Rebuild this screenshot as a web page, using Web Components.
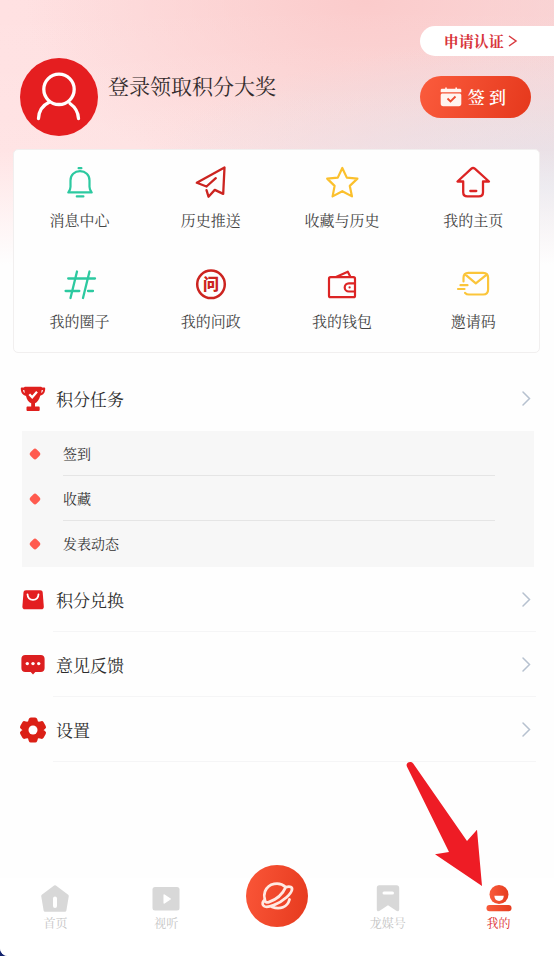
<!DOCTYPE html>
<html lang="zh-CN">
<head>
<meta charset="utf-8">
<meta name="viewport" content="width=device-width, initial-scale=1">
<title>我的</title>
<style>
  html { background: #14246e; }
  body {
    margin: 0;
    font-family: "Noto Serif CJK SC", "Noto Serif SC", "Liberation Serif", "Noto Sans CJK SC", serif;
    color: #333;
  }
</style>
</head>
<body>
<profile-page></profile-page>

<script>
const ICONS = {
  bell: `<svg viewBox="0 0 36 36" fill="none" stroke="#2cc9a0" stroke-width="2.2" stroke-linecap="round" stroke-linejoin="round"><path d="M16.6 3.2h2.8M6.3 27.4h23.4c-1.700-1.800-2.200-3.300-2.200-5.600v-6.300c0-5.500-4-9.300-9.500-9.300s-9.500 3.800-9.500 9.300v6.300c0 2.300-.5 3.800-2.200 5.600zM14.800 31.400h6.600"/></svg>`,
  plane: `<svg viewBox="0 0 36 36" fill="none" stroke="#cc2420" stroke-width="2.300" stroke-linecap="round" stroke-linejoin="round"><path d="M13.500 21.500 3.800 17.800 31.500 2.500l-1.300 26.400-8.400-4-6.300 6.800-2-6.600M13.500 21.500l9.300-8.300"/></svg>`,
  star: `<svg viewBox="0 0 36 36" fill="none" stroke="#fbc02d" stroke-width="2.200" stroke-linejoin="round"><path d="m18.300 3 4.500 9.600 10.600 1-7.600 7.300 2.200 10.500-9.700-5.200-9.700 5.200 2-10.500L3.200 13.600l10.600-1z"/></svg>`,
  home: `<svg viewBox="0 0 36 36" fill="none" stroke="#dc2424" stroke-width="2.300" stroke-linecap="round" stroke-linejoin="round"><path d="M16.400 3.700 2.500 16.500h5.700v10.700c0 2.600 1.600 4.200 4.200 4.200h11.400c2.600 0 4.200-1.600 4.200-4.200V16.500h6L19.800 3.700c-1.200-1-2.300-1-3.400 0zM15.300 26h6"/></svg>`,
  hash: `<svg viewBox="0 0 36 36" fill="none" stroke="#2cc9a0" stroke-width="2.300" stroke-linecap="round"><path d="M6.200 12.500H33M3.600 25h13.700M26 25h5M15 5.500 8.500 32M27.500 5.500 21 32"/></svg>`,
  ask: `<svg viewBox="0 0 36 36"><circle cx="18" cy="18.300" r="13.800" stroke-width="2.500" fill="none" stroke="#cc2420"/><text x="18" y="24" text-anchor="middle" font-family="Noto Sans CJK SC, sans-serif" font-size="16" font-weight="900" fill="#cc2420">问</text></svg>`,
  wallet: `<svg viewBox="0 0 36 36" fill="none" stroke="#dc2424" stroke-width="2.200" stroke-linejoin="round"><rect x="5" y="11.200" width="26" height="20" rx="1.500"/><path d="m12 11 11.800-5.300 2.700 5.300M31 17.300h-6.200a4.100 4.100 0 0 0 0 8.200H31"/><circle cx="25.600" cy="21.400" r="1.100" fill="#dc2424" stroke="none"/></svg>`,
  invite: `<svg viewBox="0 0 36 36" fill="none" stroke="#fbc53a" stroke-width="2.200" stroke-linecap="round" stroke-linejoin="round"><path d="M8.500 15.500v-3.700c0-3.200 1.700-5 5-5h14.600c3.200 0 5 1.800 5 5v11.700c0 3.200-1.800 5-5 5H14c-1.700 0-2.900-.5-3.900-1.600M10.700 8.800l10.100 8.500L32 8.300M5.500 19.200h7M3 23h6.500"/></svg>`,
  trophy: `<svg viewBox="0 0 26 26"><path fill="#df1f1d" d="M5 .8h16c.5 0 .9.300 1 .8h2.200c.6 0 1 .4 1 1 0 4.200-1.700 6.300-5 7.200-1 4-2.800 6.400-5.200 7.400v3.300h3.500c.8 0 1.200.4 1.200 1.200v2.100c0 .8-.4 1.200-1.200 1.200H7.700c-.8 0-1.200-.4-1.200-1.200v-2.100c0-.8.4-1.200 1.200-1.200h3.500v-3.300C8.600 16.200 7 13.800 6 9.900 2.600 9 .8 6.900.8 2.600c0-.6.4-1 1-1H4c.1-.5.500-.8 1-.8z"/><path fill="#fff" d="M3.100 3.900c.1 1.500.6 2.500 1.700 3L4.300 3.900zM22.900 3.900c-.1 1.500-.6 2.500-1.700 3l.5-3z"/><path fill="none" stroke="#fff" stroke-width="2.300" d="m9.300 8.300 2.900 3L17 5.800"/></svg>`,
  bag: `<svg viewBox="0 0 26 26"><path fill="#e31e20" d="M6 3.300h14.200c1.500 0 2.300.7 2.500 2.200l1.100 13.900c.1 1.700-.8 2.900-2.500 2.900H4.900c-1.700 0-2.600-1.200-2.500-2.900L3.500 5.500c.2-1.500 1-2.200 2.500-2.200z"/><path fill="none" stroke="#fff" stroke-width="1.800" stroke-linecap="round" d="M7.500 7.300c.2 3.500 2.300 5.600 5.500 5.600s5.300-2.100 5.500-5.600"/></svg>`,
  chat: `<svg viewBox="0 0 26 26"><path fill="#dc1f20" d="M5.200 3h15.600c2.300 0 3.800 1.500 3.800 3.800v9.400c0 2.300-1.500 3.800-3.800 3.800h-5.500L13 22.400 10.700 20H5.200c-2.300 0-3.800-1.500-3.800-3.800V6.800C1.400 4.500 2.900 3 5.200 3z"/><g fill="#fff"><circle cx="7.300" cy="11.600" r="1.700"/><circle cx="13" cy="11.600" r="1.700"/><circle cx="18.700" cy="11.600" r="1.700"/></g></svg>`,
  gear: `<svg viewBox="0 0 26 26"><path fill="#db2016" stroke="#db2016" stroke-width="4.400" stroke-linejoin="round" d="M10.900 2.600h4.200l1 3.300 2.200 1.300 3.400-.9 2.100 3.700-2.400 2v2l2.400 2-2.100 3.700-3.400-.9-2.200 1.300-1 3.300h-4.200l-1-3.300-2.200-1.300-3.400.9L2.200 16l2.400-2v-2l-2.400-2 2.100-3.700 3.400.9 2.200-1.300z"/><circle cx="13" cy="13" r="4.500" fill="#fff"/></svg>`,
  tabHome: `<svg viewBox="0 0 28 28"><path fill="#d8d8d8" stroke="#d8d8d8" stroke-width="3" stroke-linejoin="round" d="M14 1.800 26.300 11l-2.400 14.300H4.100L1.700 11z"/><path stroke="#fff" stroke-width="4" stroke-linecap="round" d="M14 13.500V21"/></svg>`,
  tabVideo: `<svg viewBox="0 0 28 28"><rect x=".5" y="2" width="27" height="23.500" rx="2.500" fill="#d8d8d8"/><path fill="#fff" stroke="#fff" stroke-width="1.500" stroke-linejoin="round" d="M12.200 10v8l6-4z"/></svg>`,
  tabBook: `<svg viewBox="0 0 28 28"><path fill="#d8d8d8" d="M5.200.2h17.500c1.500 0 2.500 1 2.500 2.500v21.500c0 2-1.400 2.600-2.900 1.600L14 20.300l-8.300 5.500c-1.500 1-2.900.4-2.900-1.600V2.700C2.800 1.200 3.700.2 5.200.2z"/><path stroke="#fff" stroke-width="3" stroke-linecap="round" d="M10 8h8.500"/></svg>`,
  tabMine: `<svg viewBox="0 0 28 28"><defs><linearGradient id="m"><stop stop-color="#f85b3b"/><stop offset="1" stop-color="#e63d20"/></linearGradient></defs><circle cx="14" cy="9.500" r="9.500" fill="url(#m)"/><rect x="1.500" y="20" width="25" height="6.300" rx="3" fill="url(#m)"/><path fill="#fff" d="M9.300 10.800h9.500c-.2 3.400-2 5.200-4.700 5.200s-4.600-1.800-4.800-5.200z"/></svg>`,
  planet: `<svg viewBox="0 0 36 32" fill="none" stroke="#ffe9e2" stroke-width="2.800" stroke-linecap="round" stroke-linejoin="round"><path d="M26.800 7.200C20.300 1 9.300 3 6 11.500c-1 2.700-1 5.400-.2 8M26.800 7.200c4.500-1.200 6.800 0 6.100 2.800-.5 2-2.300 4.500-5.300 7.300-7.200 6.600-19.300 11.300-22.800 8.700-2-1.500-1.300-4 1-6.500.2 2.500 1.700 3.500 4 2.600C16.500 20 23.500 14.500 26.800 7.200M13 27c8 2.700 15.500.3 17.500-7.500"/></svg>`,
  calendar: `<svg viewBox="0 0 22 20"><path fill="#fff4ef" d="M2.500 6.500h17c1 0 1.800.7 1.800 1.700v8.600c0 1.500-.9 2.400-2.400 2.400H3.100C1.600 19.200.7 18.300.7 16.800V8.200c0-1 .8-1.700 1.800-1.700zM2.200 1.800h3V.6h1.600v1.200h8.600V.6H17v1.200h2.800c1 0 1.500.6 1.500 1.400v2H.7v-2c0-.8.5-1.400 1.500-1.400z"/><path fill="none" stroke="#ee4b2e" stroke-width="1.800" d="m7.500 11.500 3 3 5-5"/></svg>`,
  user: `<svg viewBox="0 0 78 78" fill="none" stroke="#fff" stroke-width="3.300" stroke-linecap="round"><circle cx="39" cy="31.300" r="15.200"/><path d="M29.500 44C22.700 47.300 18.800 53.500 18.500 60.500M50 45.500c5.300 3.800 8.200 9 8.500 15"/></svg>`,
  chevron: `<svg viewBox="0 0 20 20" fill="none" stroke="#b6c1cf" stroke-width="1.500" stroke-linecap="round"><path d="m7 4 6.500 6.500L7 17"/></svg>`,
  more: `<svg viewBox="0 0 10 12" fill="none" stroke="#d83a3f" stroke-width="1.500"><path d="m1 1 7 5-7 5"/></svg>`,
  pointer: `<svg viewBox="0 0 90 130"><path fill="#ee1c25" d="M7 6.700C5 2.700 10.500.2 13.200 3.500L67 81l10-11.200 5 56.200L35 94.200l14-2.300z"/></svg>`
};

function define(name, css, html) {
  const template = document.createElement('template');
  customElements.define(name, class extends HTMLElement {
    connectedCallback() {
      if (this.shadowRoot) return;
      template.innerHTML = `<style>*{box-sizing:border-box}${css}</style>${typeof html === 'function' ? html(this) : html}`;
      this.attachShadow({ mode: 'open' }).append(template.content.cloneNode(true));
    }
  });
}

define('ui-icon', `:host{display:block;flex:none} svg{display:block;width:100%;height:100%;overflow:visible}`,
  el => ICONS[el.getAttribute('name')].replace('<svg', '<svg aria-hidden="true"'));

define('profile-header', `
  :host{display:grid;grid-template-columns:78px 1fr auto;grid-template-rows:110px;column-gap:10px;padding:26px 0 13px 20px}
  .avatar{align-self:end;width:78px;height:78px;padding:0;border:0;border-radius:50%;background:#e51e20}
  .avatar ui-icon{width:78px;height:78px}
  h1{margin:48px 0 0;font-size:21px;line-height:22px;font-weight:400;color:#332b2c}
  .actions{display:grid;gap:20px;justify-items:start;align-content:start}
  button{font-family:inherit;cursor:pointer}
  .verify{display:flex;align-items:center;gap:4px;width:100%;height:30px;padding:0 36px 0 24px;border:0;border-radius:15px 0 0 15px;background:#fff;color:#d8343b;font-size:15px;line-height:20px;font-weight:700}
  .verify ui-icon{width:10px;height:12px}
  .sign{display:flex;align-items:center;gap:6px;height:42px;margin-right:23px;padding:0 25px 0 20px;border:0;border-radius:21px;background:linear-gradient(110deg,#fb5c3d,#e5381c);color:#fff;font-size:17px;line-height:20px;font-weight:600}
  .sign ui-icon{width:22px;height:20px}`,
  `<button class="avatar" aria-label="头像"><ui-icon name="user"></ui-icon></button>
   <h1><slot></slot></h1>
   <div class="actions">
     <button class="verify">申请认证<ui-icon name="more"></ui-icon></button>
     <button class="sign"><ui-icon name="calendar"></ui-icon>签 到</button>
   </div>`);

define('shortcut-grid', `
  :host{display:grid;grid-template-columns:repeat(4,1fr);margin:0 14px 0 13px;border:1px solid #f1efef;border-radius:5px;background:#fefefe}`,
  `<slot></slot>`);

define('shortcut-item', `
  :host{display:block}
  a{display:grid;justify-items:center;gap:9px;padding:15px 0 21px;color:#444;text-decoration:none;font-size:15px;line-height:20px}
  ui-icon{width:36px;height:36px}`,
  el => `<a href="#"><ui-icon name="${el.getAttribute('icon')}"></ui-icon><span><slot></slot></span></a>`);

define('menu-row', `
  :host{display:block;margin:0 18px 0 20px}
  a{display:flex;align-items:center;gap:7px;color:#2c2c2c;text-decoration:none;font-size:17px}
  .mark{width:26px;height:26px}
  .body{flex:1;display:flex;align-items:center;justify-content:space-between;min-height:65px;padding-left:3px;border-bottom:1px solid #f5f5f6}
  :host([open]) .body{border-color:transparent}
  .go{width:20px;height:20px}`,
  el => `<a href="#"><ui-icon class="mark" name="${el.getAttribute('icon')}"></ui-icon><span class="body"><span><slot></slot></span><ui-icon class="go" name="chevron"></ui-icon></span></a>`);

define('task-panel', `:host{display:block;margin:0 20px 0 22px;padding:0 39px 1px 8px;background:#f7f7f7}`, `<slot></slot>`);

define('task-item', `
  :host{display:flex;align-items:center;gap:23px;font-size:14px}
  i{flex:none;width:10px;height:10px}
  svg{display:block;overflow:visible}
  span{flex:1;display:flex;align-items:center;min-height:45px;border-bottom:1px solid #e5e5e5}
  :host(:last-child) span{border-color:transparent}`,
  `<i><svg viewBox="0 0 10 10" aria-hidden="true"><path fill="#ff5b4f" stroke="#ff5b4f" stroke-width="5" stroke-linejoin="round" d="M5 2.200 7.800 5 5 7.800 2.200 5z"/></svg></i><span><slot></slot></span>`);

define('tab-bar', `
  :host{display:block;margin-top:auto;background:#fff}
  nav{display:grid;grid-template-columns:repeat(5,1fr);padding:7px 0 25px}`,
  `<nav><slot></slot></nav>`);

define('tab-item', `
  :host{display:block;position:relative}
  a{display:grid;justify-items:center;gap:2px;color:#c4c4c4;text-decoration:none;font-size:12px;line-height:16px}
  :host([active]) a{color:#dc2b2b}
  ui-icon{width:28px;height:28px}
  ::slotted(pointer-arrow){position:absolute;right:64px;bottom:41px;z-index:2}`,
  el => `<a href="#"><ui-icon name="${el.getAttribute('icon')}"></ui-icon><span>${el.getAttribute('label')}</span></a><slot></slot>`);

define('tab-center', `
  :host{display:grid;justify-items:center;align-content:start}
  button{display:grid;place-items:center;width:62px;height:62px;margin:-20px 0 -16px;padding:0;border:0;border-radius:50%;background:linear-gradient(100deg,#fa5638,#e63a1e)}
  ui-icon{width:36px;height:32px}`,
  `<button aria-label="发现"><ui-icon name="planet"></ui-icon></button>`);

define('pointer-arrow', `:host{display:block;width:90px;height:130px;pointer-events:none}`, `<ui-icon name="pointer"></ui-icon>`);

define('profile-page', `
  :host{display:flex;flex-direction:column;min-height:100vh;overflow:hidden;border-bottom-left-radius:8px;
    background:
      linear-gradient(to bottom,rgba(254,254,254,0) 0,rgba(254,254,254,.1) 150px,#fefefe 265px),
      radial-gradient(ellipse 420px 150px at 100% 190px,rgba(226,224,232,.95),rgba(226,224,232,0)),
      radial-gradient(ellipse 340px 200px at 66% 0,#fbcbcb,rgba(251,203,203,0)),
      linear-gradient(95deg,#ffe1e2 0,#fde0e0 45%,#f6d8da 100%)}
  main{padding-bottom:13px}
  shortcut-grid{margin-bottom:13px}`,
  `<profile-header>登录领取积分大奖</profile-header>
   <main>
     <shortcut-grid>
       <shortcut-item icon="bell">消息中心</shortcut-item>
       <shortcut-item icon="plane">历史推送</shortcut-item>
       <shortcut-item icon="star">收藏与历史</shortcut-item>
       <shortcut-item icon="home">我的主页</shortcut-item>
       <shortcut-item icon="hash">我的圈子</shortcut-item>
       <shortcut-item icon="ask">我的问政</shortcut-item>
       <shortcut-item icon="wallet">我的钱包</shortcut-item>
       <shortcut-item icon="invite">邀请码</shortcut-item>
     </shortcut-grid>
     <menu-row icon="trophy" open>积分任务</menu-row>
     <task-panel>
       <task-item>签到</task-item>
       <task-item>收藏</task-item>
       <task-item>发表动态</task-item>
     </task-panel>
     <menu-row icon="bag">积分兑换</menu-row>
     <menu-row icon="chat">意见反馈</menu-row>
     <menu-row icon="gear">设置</menu-row>
   </main>
   <tab-bar>
     <tab-item icon="tabHome" label="首页"></tab-item>
     <tab-item icon="tabVideo" label="视听"></tab-item>
     <tab-center></tab-center>
     <tab-item icon="tabBook" label="龙媒号"></tab-item>
     <tab-item icon="tabMine" label="我的" active><pointer-arrow></pointer-arrow></tab-item>
   </tab-bar>`);
</script>
</body>
</html>
